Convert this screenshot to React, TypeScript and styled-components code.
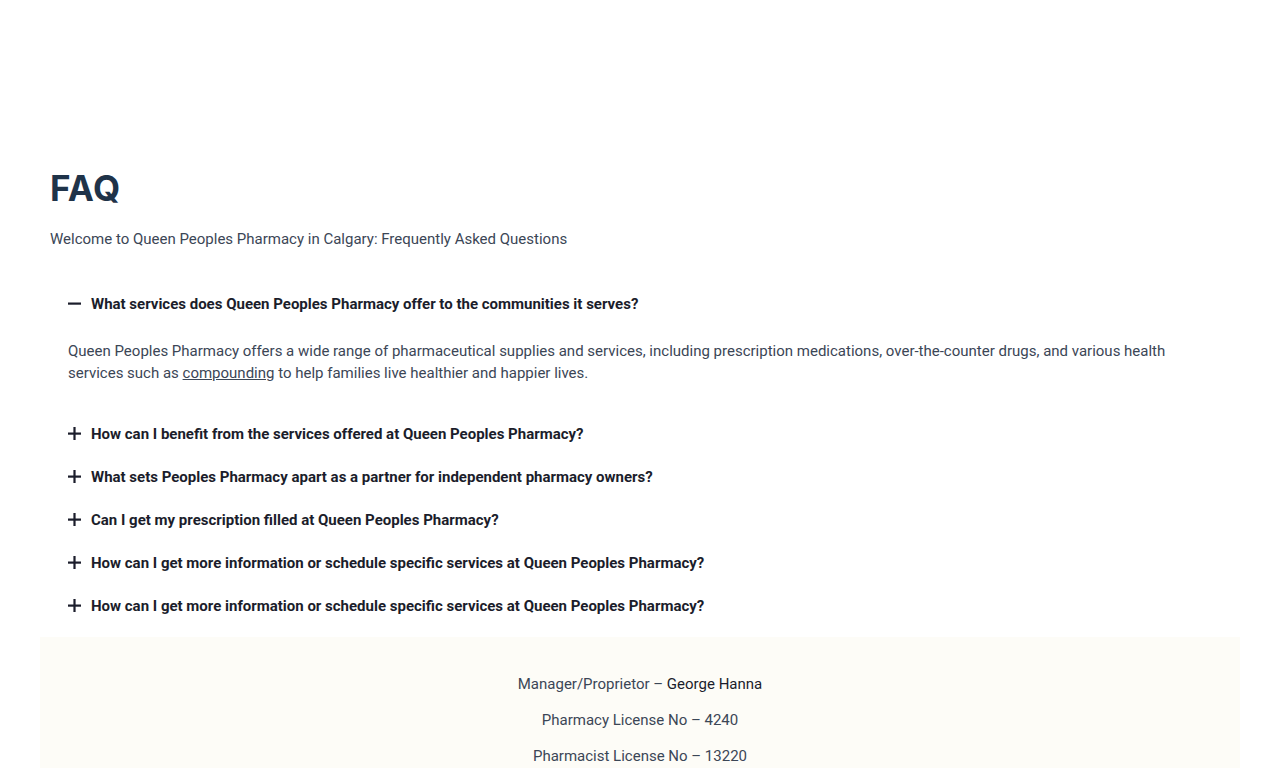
import React, {useState} from 'react'
import styled, {createGlobalStyle} from 'styled-components'

const GlobalStyle = createGlobalStyle`
  body {
    margin: 0;
    background: #ffffff;
    font-family: Roboto, "Liberation Sans", sans-serif;
  }
`

const FAQS = [
    {
        q: 'What services does Queen Peoples Pharmacy offer to the communities it serves?',
        a: true,
    },
    {q: 'How can I benefit from the services offered at Queen Peoples Pharmacy?'},
    {q: 'What sets Peoples Pharmacy apart as a partner for independent pharmacy owners?'},
    {q: 'Can I get my prescription filled at Queen Peoples Pharmacy?'},
    {q: 'How can I get more information or schedule specific services at Queen Peoples Pharmacy?'},
    {q: 'How can I get more information or schedule specific services at Queen Peoples Pharmacy?'},
]

const Toggle = ({open}: { open: boolean }) => (
    <svg width="13" height="13" viewBox="0 0 13 13">
        <rect x="0" y="5.5" width="13" height="2.2" fill="#1b1d2b"/>
        {!open && <rect x="5.4" y="0" width="2.2" height="13" fill="#1b1d2b"/>}
    </svg>
)

export default function App() {
    const [openIndex, setOpenIndex] = useState<number>(0)

    return (
        <>
            <GlobalStyle/>
            <Page>
                <Section>
                    <Title>FAQ</Title>
                    <Intro>Welcome to Queen Peoples Pharmacy in Calgary: Frequently Asked Questions</Intro>
                    <List>
                        {FAQS.map((item, index) =>
                            <Item key={index}>
                                <Question onClick={() => setOpenIndex(openIndex === index ? -1 : index)}>
                                    <Toggle open={openIndex === index}/>
                                    <span>{item.q}</span>
                                </Question>
                                {openIndex === index && item.a &&
                                    <Answer>
                                        Queen Peoples Pharmacy offers a wide range of pharmaceutical supplies and
                                        services, including prescription medications, over-the-counter drugs, and
                                        various health services such as <Link href="#">compounding</Link> to help
                                        families live healthier and happier lives.
                                    </Answer>}
                            </Item>
                        )}
                    </List>
                </Section>
                <Footer>
                    <FooterLine>Manager/Proprietor – <Strong>George Hanna</Strong></FooterLine>
                    <FooterLine>Pharmacy License No – 4240</FooterLine>
                    <FooterLine>Pharmacist License No – 13220</FooterLine>
                </Footer>
            </Page>
        </>
    )
}

const Page = styled.div`
  padding: 0 40px;
`

const Section = styled.section`
  padding: 166px 10px 0;
`

const Title = styled.h2`
  margin: 0;
  font-family: Inter, "Open Sans", sans-serif;
  font-weight: 700;
  font-size: 35px;
  line-height: 44px;
  letter-spacing: 0.5px;
  color: #1f3349;
`

const Intro = styled.p`
  margin: 18px 0 0;
  font-size: 15px;
  line-height: 22px;
  color: #3b4656;
`

const List = styled.div`
  margin-top: 32px;
  padding-left: 18px;
  display: flex;
  flex-direction: column;
`

const Item = styled.div``

const Question = styled.div`
  display: flex;
  align-items: center;
  gap: 10px;
  height: 43px;
  font-size: 15px;
  font-weight: 700;
  color: #1b1d2b;
  cursor: pointer;
`

const Answer = styled.p`
  margin: 15px 0 28px;
  padding-right: 20px;
  font-size: 15px;
  line-height: 22px;
  color: #3b4656;
`

const Link = styled.a`
  color: #3b4656;
  text-decoration: underline;
`

const Footer = styled.footer`
  margin-top: 10px;
  padding: 36px 0 0;
  background: #fdfcf7;
  display: flex;
  flex-direction: column;
  align-items: center;
  gap: 14px;
  min-height: 140px;
`

const FooterLine = styled.p`
  margin: 0;
  font-size: 15px;
  line-height: 22px;
  color: #3b4656;
`

const Strong = styled.span`
  color: #1b1d2b;
`
